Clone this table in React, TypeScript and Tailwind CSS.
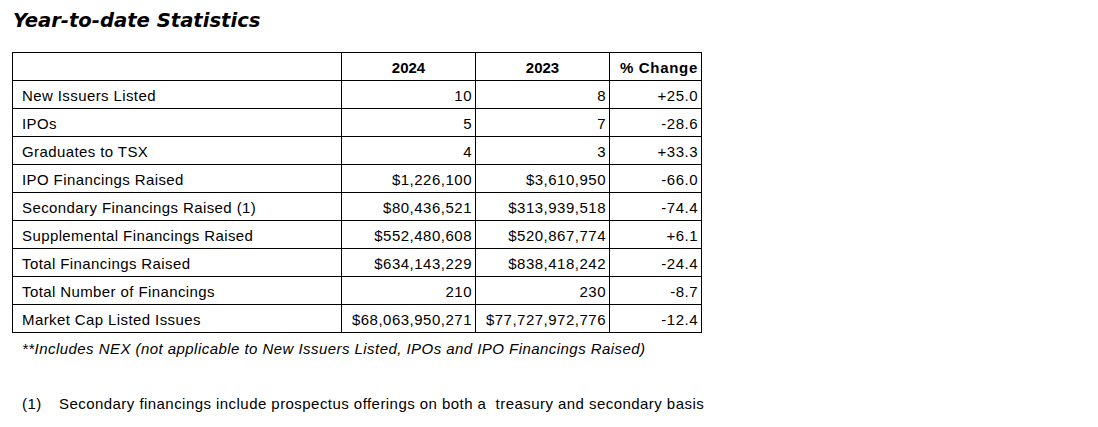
import React from "react";

const rows: [string, string, string, string][] = [
  ["New Issuers Listed", "10", "8", "+25.0"],
  ["IPOs", "5", "7", "-28.6"],
  ["Graduates to TSX", "4", "3", "+33.3"],
  ["IPO Financings Raised", "$1,226,100", "$3,610,950", "-66.0"],
  ["Secondary Financings Raised (1)", "$80,436,521", "$313,939,518", "-74.4"],
  ["Supplemental Financings Raised", "$552,480,608", "$520,867,774", "+6.1"],
  ["Total Financings Raised", "$634,143,229", "$838,418,242", "-24.4"],
  ["Total Number of Financings", "210", "230", "-8.7"],
  ["Market Cap Listed Issues", "$68,063,950,271", "$77,727,972,776", "-12.4"],
];

export default function App() {
  return (
    <div className="w-[1098px] h-[427px] bg-white text-black pl-[12px] pt-[7px] font-['Liberation_Sans',Arial,sans-serif]">
      <h1 className="font-['DejaVu_Sans',Verdana,sans-serif] font-bold italic text-[19.6px] leading-[28px] pl-[1px]">
        Year-to-date Statistics
      </h1>
      <table className="mt-[17px] border-collapse table-fixed w-[690px] text-[15px]">
        <colgroup>
          <col className="w-[329px]" />
          <col className="w-[134px]" />
          <col className="w-[134px]" />
          <col className="w-[92px]" />
        </colgroup>
        <thead>
          <tr className="h-[28px]">
            <th className="border border-black"></th>
            <th className="border border-black font-bold text-center pt-[3px]">2024</th>
            <th className="border border-black font-bold text-center pt-[3px]">2023</th>
            <th className="border border-black font-bold text-right pr-[3px] pt-[3px] tracking-[0.7px]">% Change</th>
          </tr>
        </thead>
        <tbody>
          {rows.map((r) => (
            <tr key={r[0]} className="h-[28px]">
              <td className="border border-black pl-[9px] pt-[3px] tracking-[0.4px] whitespace-nowrap">{r[0]}</td>
              <td className="border border-black text-right pr-[3px] pt-[3px] tracking-[0.5px] whitespace-nowrap">{r[1]}</td>
              <td className="border border-black text-right pr-[3px] pt-[3px] tracking-[0.5px] whitespace-nowrap">{r[2]}</td>
              <td className="border border-black text-right pr-[3px] pt-[3px] tracking-[0.5px] whitespace-nowrap">{r[3]}</td>
            </tr>
          ))}
        </tbody>
      </table>
      <p className="italic text-[15px] leading-[20px] mt-[6px] pl-[10px] tracking-[0.45px]">
        **Includes NEX (not applicable to New Issuers Listed, IPOs and IPO Financings Raised)
      </p>
      <div className="flex text-[15px] leading-[20px] mt-[35px] pl-[10px] tracking-[0.45px]">
        <span className="w-[37px]">(1)</span>
        <span className="whitespace-pre">Secondary financings include prospectus offerings on both a  treasury and secondary basis</span>
      </div>
    </div>
  );
}
